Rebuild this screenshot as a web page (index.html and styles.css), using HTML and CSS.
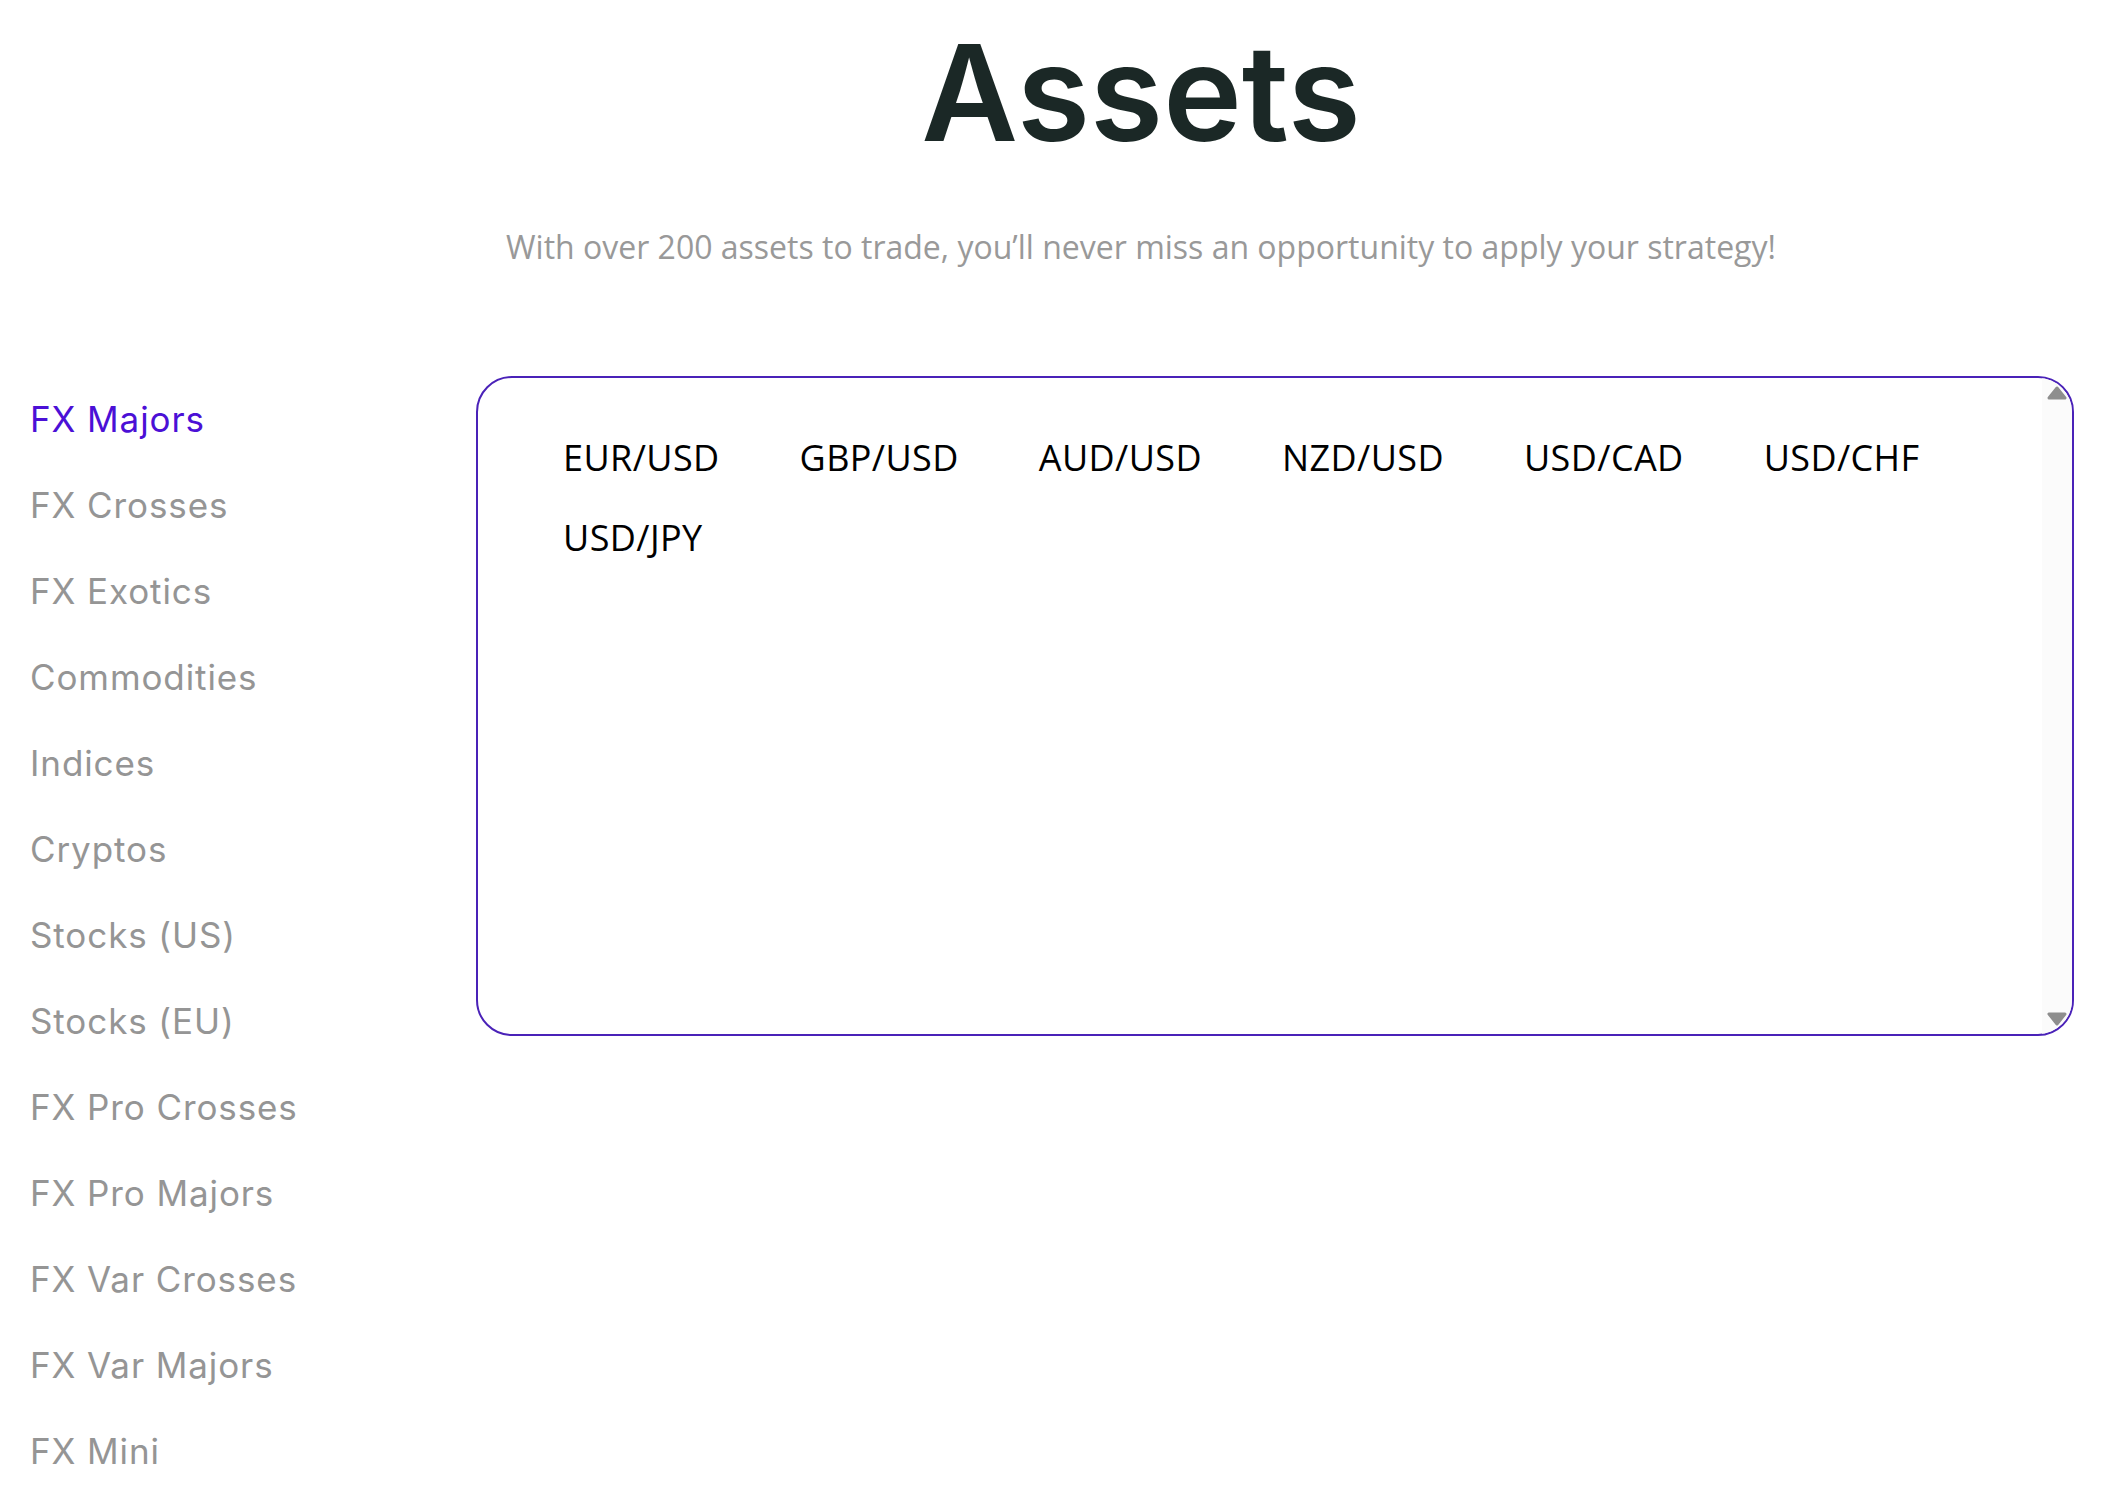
FILE: index.html
```html
<!DOCTYPE html>
<html lang="en">
<head>
    <meta charset="utf-8">
    <title>Assets</title>
    <link rel="stylesheet" href="styles.css">
</head>
<body>
    <header class="intro">
        <h1>Assets</h1>
        <p class="intro-text">With over 200 assets to trade, you’ll never miss an opportunity to apply your strategy!</p>
    </header>

    <div class="assets">
        <ul class="asset-tabs">
            <li class="active">FX Majors</li>
            <li>FX Crosses</li>
            <li>FX Exotics</li>
            <li>Commodities</li>
            <li>Indices</li>
            <li>Cryptos</li>
            <li>Stocks (US)</li>
            <li>Stocks (EU)</li>
            <li>FX Pro Crosses</li>
            <li>FX Pro Majors</li>
            <li>FX Var Crosses</li>
            <li>FX Var Majors</li>
            <li>FX Mini</li>
        </ul>

        <div class="asset-panel">
            <div class="asset-list">
                <span class="asset">EUR/USD</span>
                <span class="asset">GBP/USD</span>
                <span class="asset">AUD/USD</span>
                <span class="asset">NZD/USD</span>
                <span class="asset">USD/CAD</span>
                <span class="asset">USD/CHF</span>
                <span class="asset">USD/JPY</span>
            </div>

            <div class="scrollbar">
                <svg class="scroll-arrow" width="20" height="14" viewBox="0 0 20 14">
                    <polygon points="10,2 18,12 2,12" fill="#8e8e8e" stroke="#8e8e8e" stroke-width="3" stroke-linejoin="round"/>
                </svg>
                <svg class="scroll-arrow" width="20" height="14" viewBox="0 0 20 14">
                    <polygon points="2,2 18,2 10,12" fill="#8e8e8e" stroke="#8e8e8e" stroke-width="3" stroke-linejoin="round"/>
                </svg>
            </div>
        </div>
    </div>
</body>
</html>
```

FILE: styles.css
```css
html {
    overflow: hidden;
}

body {
    margin: 0;
    background: #ffffff;
    font-family: 'Open Sans', 'Noto Sans', sans-serif;
}

.intro {
    padding: 26px 0 0 176px;
    text-align: center;
}

.intro h1 {
    margin: 0;
    font-family: 'Inter', sans-serif;
    font-weight: 600;
    font-size: 133px;
    line-height: 1;
    color: #1b2826;
}

.intro-text {
    margin: 69px 0 0;
    font-size: 32px;
    line-height: 38px;
    color: #999999;
}

.assets {
    display: flex;
    align-items: flex-start;
    margin-top: 110px;
    padding: 0 32px 0 30px;
}

.asset-tabs {
    list-style: none;
    margin: 0;
    padding: 0;
    width: 446px;
    flex-shrink: 0;
}

.asset-tabs li {
    font-family: 'Inter', sans-serif;
    font-size: 35px;
    line-height: 86px;
    letter-spacing: 0.9px;
    color: #959595;
    cursor: pointer;
}

.asset-tabs li.active {
    color: #4b10d6;
}

.asset-panel {
    flex: 1;
    position: relative;
    box-sizing: border-box;
    height: 660px;
    border: 2px solid #4a22b8;
    border-radius: 36px;
    overflow: hidden;
}

.asset-list {
    display: flex;
    flex-wrap: wrap;
    align-content: flex-start;
    gap: 39px 80px;
    padding: 59px 85px;
}

.asset {
    font-size: 36px;
    line-height: 41px;
    letter-spacing: 0.4px;
    color: #000000;
}

.scrollbar {
    position: absolute;
    top: -2px;
    bottom: -2px;
    right: 0;
    width: 30px;
    background: #fbfbfb;
    display: flex;
    flex-direction: column;
    justify-content: space-between;
    align-items: center;
    padding: 10px 0;
    box-sizing: border-box;
}

.scroll-arrow {
    display: block;
}
```
